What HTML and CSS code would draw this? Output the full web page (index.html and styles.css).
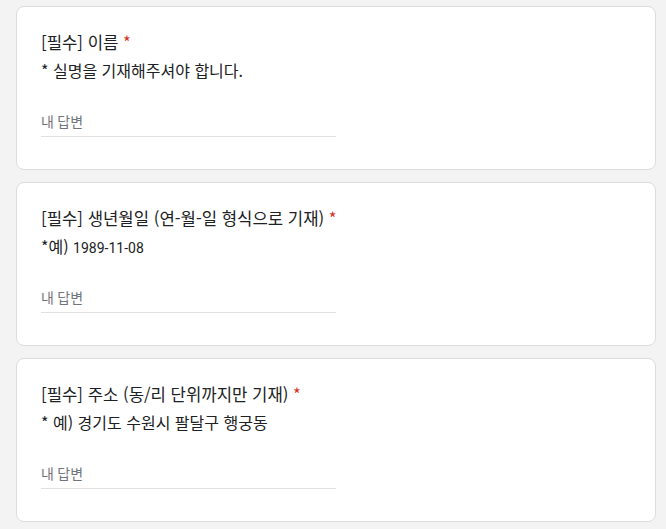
FILE: index.html
```html
<!DOCTYPE html>
<html lang="ko">
<head>
<meta charset="utf-8">
<title>Form</title>
<link rel="stylesheet" href="styles.css">
</head>
<body>
<main class="form">
  <section class="card">
    <div class="title">[필수] 이름 <span class="req">*</span></div>
    <div class="desc">* 실명을 기재해주셔야 합니다.</div>
    <input class="answer" type="text" placeholder="내 답변">
  </section>
  <section class="card">
    <div class="title">[필수] 생년월일 (연-월-일 형식으로 기재) <span class="req">*</span></div>
    <div class="desc">*예) <span class="num">1989-11-08</span></div>
    <input class="answer" type="text" placeholder="내 답변">
  </section>
  <section class="card">
    <div class="title">[필수] 주소 (동/리 단위까지만 기재) <span class="req">*</span></div>
    <div class="desc">* 예) 경기도 수원시 팔달구 행궁동</div>
    <input class="answer" type="text" placeholder="내 답변">
  </section>
</main>
</body>
</html>
```

FILE: styles.css
```css
html, body {
  margin: 0;
  padding: 0;
  background: #f3f3f3;
}
body {
  font-family: "Noto Sans CJK KR", Roboto, sans-serif;
  color: #202124;
}
.form {
  display: flex;
  flex-direction: column;
  gap: 12px;
  padding: 6px 0 0 16px;
  width: 640px;
}
.card {
  background: #fff;
  border: 1px solid #dadce0;
  border-radius: 8px;
  padding: 24px 24px 32px;
  display: flex;
  flex-direction: column;
  align-items: flex-start;
}
.title {
  font-size: 16.7px;
  line-height: 22px;
  height: 22px;
}
.req {
  color: #d93025;
}
.desc {
  margin-top: 7px;
  font-size: 16px;
  line-height: 20px;
  height: 20px;
}
.num {
  font-family: Roboto, "Noto Sans CJK KR", sans-serif;
  font-size: 14px;
}
.answer {
  margin: 32px 0 0;
  width: 50%;
  box-sizing: border-box;
  border: none;
  border-bottom: 1px solid #e0e0e0;
  padding: 0 0 4px;
  font-family: Roboto, "Noto Sans CJK KR", sans-serif;
  font-size: 14px;
  line-height: 20px;
  height: 25px;
  color: #202124;
  background: transparent;
  outline: none;
}
.answer::placeholder {
  color: #70757a;
}
```
